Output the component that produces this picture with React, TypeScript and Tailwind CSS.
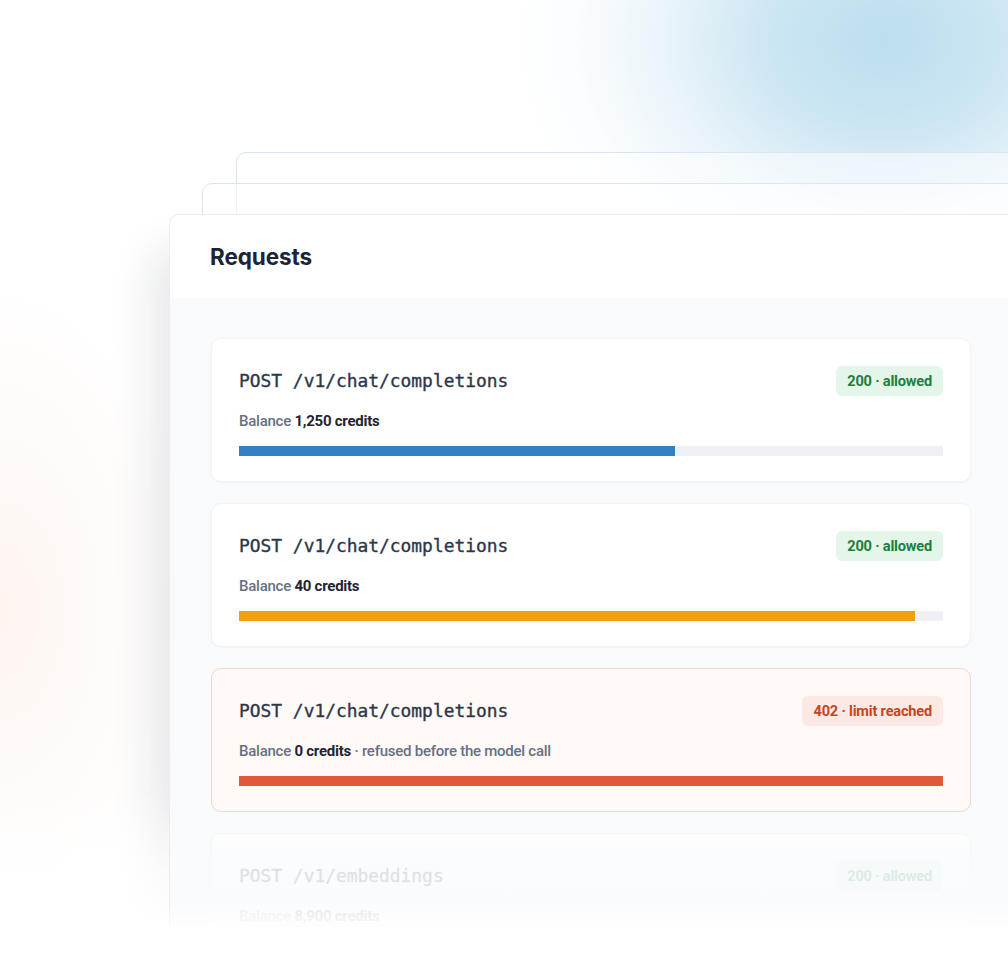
import React from "react";

type Req = {
  path: string;
  status: string;
  tone: "ok" | "limit";
  value: string;
  note?: string;
  pct: number;
  bar: string;
  alert?: boolean;
};

const rows: Req[] = [
  { path: "POST /v1/chat/completions", status: "200 · allowed", tone: "ok", value: "1,250 credits", pct: 62, bar: "bg-[#3380c2]" },
  { path: "POST /v1/chat/completions", status: "200 · allowed", tone: "ok", value: "40 credits", pct: 96, bar: "bg-[#f2a011]" },
  {
    path: "POST /v1/chat/completions",
    status: "402 · limit reached",
    tone: "limit",
    value: "0 credits",
    note: "· refused before the model call",
    pct: 100,
    bar: "bg-[#e05a3a]",
    alert: true,
  },
  { path: "POST /v1/embeddings", status: "200 · allowed", tone: "ok", value: "8,900 credits", pct: 30, bar: "bg-[#3380c2]" },
];

function RequestCard({ r }: { r: Req }) {
  return (
    <div
      className={
        "rounded-[10px] border px-[27px] pt-[27px] pb-[25px] " +
        (r.alert
          ? "bg-[#fffaf7] border-[#f3d6ca]"
          : "bg-white border-[#f1f3f6] shadow-[0_1px_2px_rgba(15,23,42,0.03)]")
      }
    >
      <div className="flex h-[30px] items-center justify-between">
        <span className="text-[17.9px] text-[#2c3748] [-webkit-text-stroke:0.35px_#2c3748] [font-family:'DejaVu_Sans_Mono',monospace]">
          {r.path}
        </span>
        <span
          className={
            "flex h-[30px] items-center rounded-[6px] px-[11px] pt-px text-[14.6px] font-bold tracking-[-0.2px] [font-family:Roboto,sans-serif] " +
            (r.tone === "ok" ? "bg-[#e4f5ea] text-[#1c7f3f]" : "bg-[#fde9e4] text-[#c4461c]")
          }
        >
          {r.status}
        </span>
      </div>
      <div className="mt-[15px] h-[20px] text-[15px] leading-[20px] tracking-[-0.25px] text-[#667085] [font-family:Roboto,sans-serif] font-medium">
        Balance <span className="font-bold text-[#1e2533]">{r.value}</span>
        {r.note ? <span> {r.note}</span> : null}
      </div>
      <div className="mt-[15px] h-[10px] bg-[#eef0f4]">
        <div className={"h-full " + r.bar} style={{ width: `${r.pct}%` }} />
      </div>
    </div>
  );
}

export default function App() {
  return (
    <div className="relative h-[970px] w-[1008px] overflow-hidden bg-white">
      {/* soft colour glows behind the stack */}
      <div className="absolute inset-0 bg-[radial-gradient(ellipse_380px_300px_at_885px_40px,rgba(188,222,238,1)_0%,rgba(198,227,242,0.9)_30%,rgba(220,237,247,0.6)_58%,rgba(240,247,252,0.25)_82%,rgba(255,255,255,0)_100%)]" />
      <div className="absolute inset-0 bg-[radial-gradient(ellipse_190px_330px_at_0px_610px,rgba(253,238,230,0.6)_0%,rgba(253,243,238,0.35)_55%,rgba(255,255,255,0)_100%)]" />

      {/* stacked sheets behind the panel */}
      <div className="absolute left-[236px] top-[152px] h-[300px] w-[820px] rounded-[10px] border border-[#d6e5ef] bg-white/50" />
      <div className="absolute left-[202px] top-[183px] h-[300px] w-[840px] rounded-[10px] border border-[#d9e6ef] bg-white/55" />

      {/* drop shadow of the panel, drawn separately so the foot can fade */}
      <div className="absolute left-[169px] top-[214px] h-[713px] w-[843px] rounded-tl-[10px] bg-white shadow-[-14px_36px_46px_rgba(15,23,42,0.11)]" />
      <div className="absolute inset-x-0 top-[790px] h-[180px] bg-[linear-gradient(to_bottom,rgba(255,255,255,0)_0px,rgba(255,255,255,0.75)_80px,#ffffff_140px)]" />

      <div className="relative pl-[169px] pt-[214px]">
        <div className="relative h-[713px] w-[843px] overflow-hidden rounded-tl-[10px] border-l border-t border-[#e8edf2] bg-white">
          <div className="flex h-[83px] items-center px-10">
            <h1 className="text-[22.5px] font-bold tracking-[-0.1px] text-[#1d2433] [font-family:Inter,sans-serif]">Requests</h1>
          </div>
          <div className="flex h-full flex-col gap-[21px] bg-[#f8fafc] px-[41px] pt-10">
            {rows.map((r, i) => (
              <RequestCard key={i} r={r} />
            ))}
          </div>
          {/* list fades into the panel background */}
          <div className="pointer-events-none absolute inset-x-0 bottom-0 h-[112px] bg-[linear-gradient(to_bottom,rgba(250,251,253,0)_0px,rgba(250,251,253,0.86)_50px,rgba(250,251,253,0.9)_100%)]" />
        </div>
      </div>
      {/* the panel foot melts into the page */}
      <div className="pointer-events-none absolute inset-x-0 top-[900px] h-[70px] bg-[linear-gradient(to_bottom,rgba(255,255,255,0)_0px,rgba(255,255,255,0.7)_27px,#ffffff_40px)]" />
    </div>
  );
}
